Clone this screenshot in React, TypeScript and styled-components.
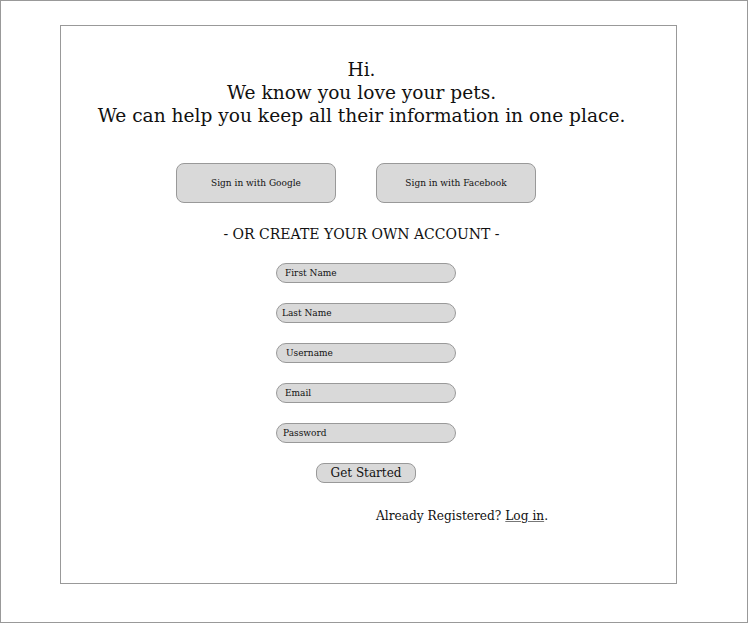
import React from "react";
import styled, { createGlobalStyle } from "styled-components";

const Global = createGlobalStyle`
  html, body { margin: 0; padding: 0; background: #fff; }
  * { box-sizing: border-box; }
`;

const FONT = `"DejaVu Serif", "Liberation Serif", serif`;

const Frame = styled.div`
  width: 748px;
  height: 623px;
  border: 1px solid #999;
  padding: 24px 0 0 59px;
  font-family: ${FONT};
  color: #111;
`;

const Card = styled.div`
  width: 617px;
  height: 559px;
  border: 1px solid #999;
  display: flex;
  flex-direction: column;
  align-items: flex-start;
`;

const Intro = styled.h1`
  margin: 32px 0 0 0;
  width: 100%;
  padding-right: 14px;
  text-align: center;
  font-weight: normal;
  font-size: 18.6px;
  line-height: 23px;
`;

const SocialRow = styled.div`
  display: flex;
  gap: 40px;
  margin: 36px 0 0 115px;
`;

const SocialButton = styled.button`
  width: 160px;
  height: 40px;
  border: 1px solid #999;
  border-radius: 8px;
  background: #d9d9d9;
  font-family: ${FONT};
  font-size: 9px;
  color: #111;
  padding: 0;
`;

const Divider = styled.div`
  margin-top: 22px;
  width: 100%;
  padding-right: 14px;
  text-align: center;
  font-size: 14px;
  line-height: 18px;
`;

const Fields = styled.div`
  display: flex;
  flex-direction: column;
  gap: 20px;
  margin: 20px 0 0 215px;
`;

const Field = styled.input<{ $pad: number }>`
  width: 180px;
  height: 20px;
  border: 1px solid #999;
  border-radius: 10px;
  background: #d9d9d9;
  font-family: ${FONT};
  font-size: 9px;
  padding: 0 0 0 ${(p) => p.$pad}px;
  color: #111;
  outline: none;
  &::placeholder { color: #111; opacity: 1; }
`;

const StartButton = styled.button`
  margin: 20px 0 0 255px;
  width: 100px;
  height: 20px;
  border: 1px solid #999;
  border-radius: 8px;
  background: #d9d9d9;
  font-family: ${FONT};
  font-size: 12px;
  color: #111;
  padding: 0;
`;

const LoginLine = styled.p`
  margin: 25px 0 0 315px;
  font-size: 12.2px;
  line-height: 16px;
`;

const LoginLink = styled.a`
  color: #111;
  text-decoration: underline;
  text-decoration-color: #777;
`;

const fields: [string, number][] = [
  ["First Name", 8],
  ["Last Name", 5],
  ["Username", 9],
  ["Email", 8],
  ["Password", 6],
];

export default function App() {
  return (
    <>
      <Global />
      <Frame>
        <Card>
          <Intro>
            Hi.
            <br />
            We know you love your pets.
            <br />
            We can help you keep all their information in one place.
          </Intro>
          <SocialRow>
            <SocialButton>Sign in with Google</SocialButton>
            <SocialButton>Sign in with Facebook</SocialButton>
          </SocialRow>
          <Divider>- OR CREATE YOUR OWN ACCOUNT -</Divider>
          <Fields>
            {fields.map(([label, pad]) => (
              <Field key={label} placeholder={label} $pad={pad} />
            ))}
          </Fields>
          <StartButton>Get Started</StartButton>
          <LoginLine>
            Already Registered? <LoginLink href="#">Log in</LoginLink>.
          </LoginLine>
        </Card>
      </Frame>
    </>
  );
}
